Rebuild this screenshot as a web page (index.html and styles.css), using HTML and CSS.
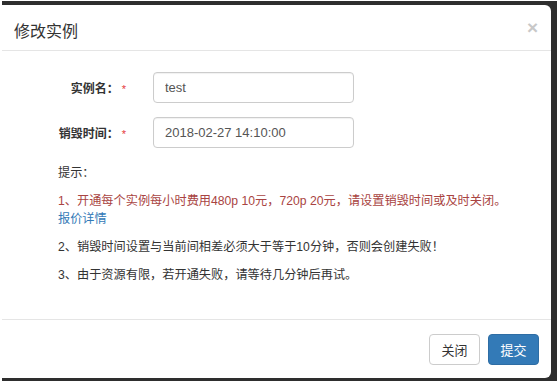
FILE: index.html
```html
<!DOCTYPE html>
<html lang="zh-CN">
<head>
  <meta charset="UTF-8">
  <meta name="viewport" content="width=device-width, initial-scale=1.0">
  <title>修改实例</title>
  <link rel="stylesheet" href="styles.css">
</head>
<body>
  <div class="frame">
    <div class="modal">
      <div class="modal-header">
        <h4 class="modal-title">修改实例</h4>
        <button class="close" type="button">&times;</button>
      </div>

      <div class="modal-body">
        <!-- 表单 -->
        <div class="form-row">
          <label class="form-label" for="name">实例名：<span class="required">*</span></label>
          <input type="text" id="name" class="form-control" value="test">
        </div>
        <div class="form-row">
          <label class="form-label" for="destroyTime">销毁时间：<span class="required">*</span></label>
          <input type="text" id="destroyTime" class="form-control" value="2018-02-27 14:10:00">
        </div>

        <!-- 提示 -->
        <div class="tips">
          <p>提示：</p>
          <p class="text-danger">1、开通每个实例每小时费用480p 10元，720p 20元，请设置销毁时间或及时关闭。<br><a href="#">报价详情</a></p>
          <p>2、销毁时间设置与当前间相差必须大于等于10分钟，否则会创建失败！</p>
          <p>3、由于资源有限，若开通失败，请等待几分钟后再试。</p>
        </div>
      </div>

      <div class="modal-footer">
        <button class="btn btn-default" type="button">关闭</button>
        <button class="btn btn-primary" type="button">提交</button>
      </div>
    </div>
  </div>
</body>
</html>
```

FILE: styles.css
```css
body {
  margin: 0;
  background: #fff;
  font-family: "Liberation Sans", "Noto Sans CJK SC", sans-serif;
  color: #333;
}
.frame {
  margin: 1px 0 0 2px;
  height: 380px;
  padding: 4px 6px 3px 0;
  box-sizing: border-box;
  background: #2e2e2e;
}
.modal {
  height: 100%;
  background: #fff;
  border-radius: 0 6px 6px 0;
  display: flex;
  flex-direction: column;
}
.modal-header {
  display: flex;
  justify-content: space-between;
  align-items: flex-start;
  padding: 15px 13px 6px 12px;
  border-bottom: 1px solid #e5e5e5;
}
.modal-title {
  margin: 0;
  font-size: 16px;
  font-weight: normal;
  line-height: 24px;
  color: #333;
}
.close {
  margin-top: -1px;
  padding: 0;
  border: none;
  background: none;
  font-family: "Liberation Sans", sans-serif;
  font-size: 19px;
  font-weight: bold;
  line-height: 17px;
  color: #c8c8c8;
  cursor: pointer;
}
.modal-body {
  flex: 1;
  padding: 21px 0 0 0;
}
.form-row {
  display: grid;
  grid-template-columns: 124px 201px;
  column-gap: 27px;
  align-items: center;
  margin-bottom: 14px;
}
.form-label {
  text-align: right;
  font-size: 12px;
  font-weight: bold;
  color: #333;
}
.required {
  margin-left: 3px;
  color: #e4393c;
  font-size: 11px;
  font-weight: normal;
}
.form-control {
  height: 31px;
  padding: 0 11px;
  font-family: "Liberation Sans", "Noto Sans CJK SC", sans-serif;
  font-size: 13px;
  color: #555;
  border: 1px solid #ccc;
  border-radius: 4px;
  box-sizing: border-box;
  box-shadow: inset 0 1px 1px rgba(0,0,0,0.06);
}
.tips {
  margin: 16px 0 0 56px;
  font-size: 12.2px;
  line-height: 18px;
}
.tips p {
  margin: 0 0 10px;
}
.text-danger {
  color: #a94442;
}
.tips a {
  color: #337ab7;
  text-decoration: none;
}
.modal-footer {
  display: flex;
  justify-content: flex-end;
  gap: 8px;
  padding: 14px 12px 13px;
  border-top: 1px solid #e5e5e5;
}
.btn {
  width: 51px;
  height: 31px;
  padding: 0;
  font-family: "Liberation Sans", "Noto Sans CJK SC", sans-serif;
  font-size: 13px;
  border-radius: 4px;
  cursor: pointer;
}
.btn-default {
  background: #fff;
  color: #333;
  border: 1px solid #ccc;
}
.btn-primary {
  background: #337ab7;
  color: #fff;
  border: 1px solid #2e6da4;
}
```
